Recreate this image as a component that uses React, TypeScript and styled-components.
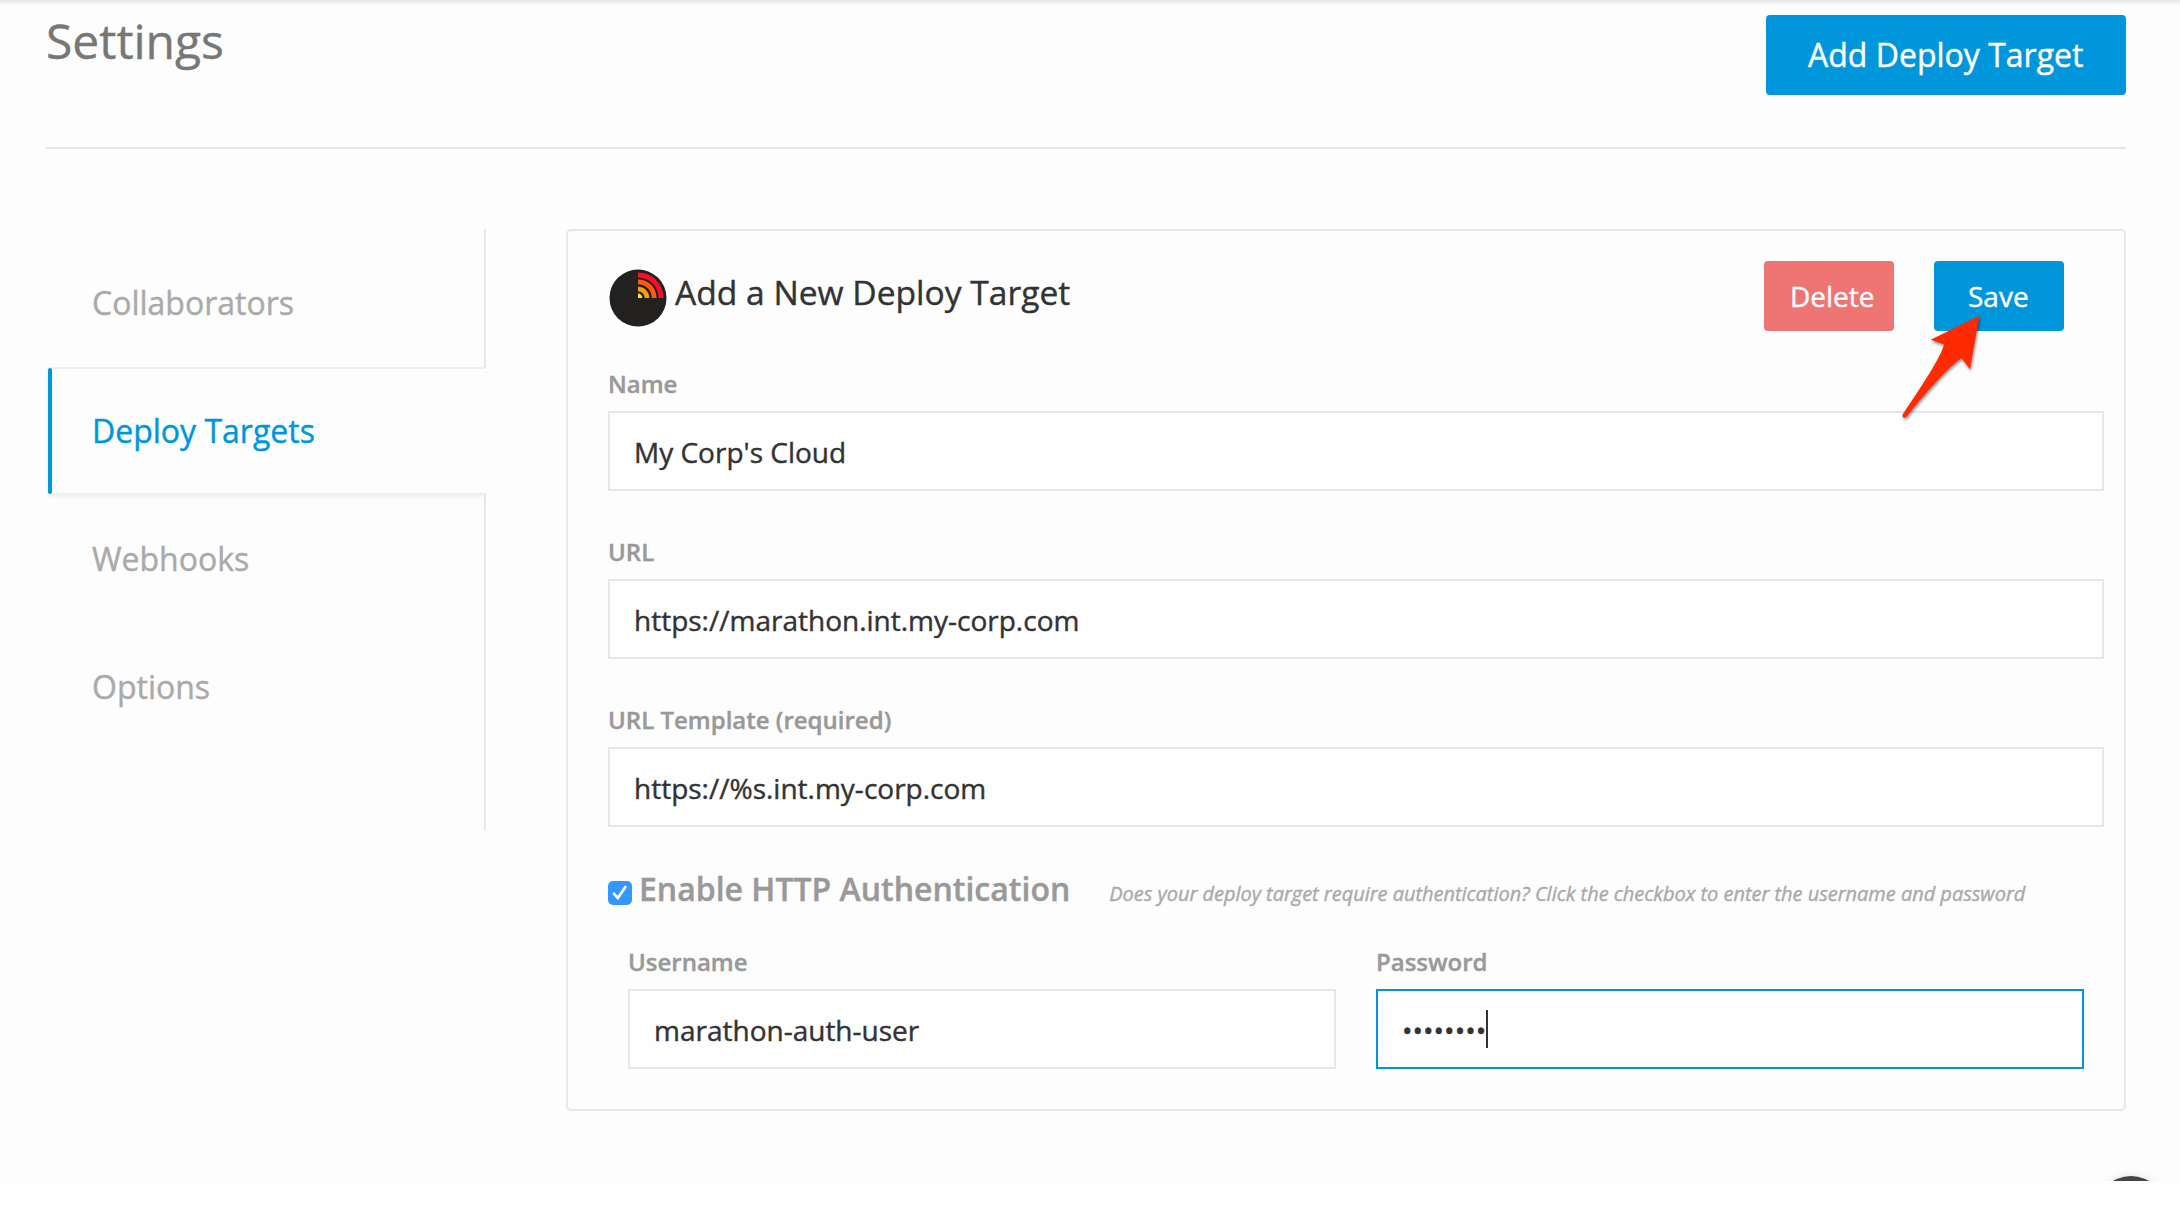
import React from 'react';
import styled, { createGlobalStyle, css } from 'styled-components';

const blue = '#0096db';
const line = '#e7e7e7';

const GlobalStyle = createGlobalStyle`
  * { box-sizing: border-box; }
  body {
    margin: 0;
    background: #fefefe;
    font-family: 'Open Sans', 'Noto Sans', sans-serif;
    color: #333;
    -webkit-text-stroke: 0.4px;
  }
`;

const Screen = styled.div`
  position: relative;
  width: 2180px;
  height: 1181px;
  padding: 0 54px 0 46px;
  overflow: hidden;
  background: linear-gradient(#e5e5e5 0, #e8e8e8 1px, #f4f4f4 3px, #fdfdfd 6px) #fdfdfd;
`;

const Header = styled.header`
  display: flex;
  justify-content: space-between;
  align-items: flex-start;
  height: 149px;
  padding-top: 15px;
  border-bottom: 2px solid ${line};
`;

const PageTitle = styled.h1`
  margin: -7px 0 0;
  font-size: 48px;
  line-height: 66px;
  font-weight: 400;
  color: #777;
`;

const Button = styled.button<{ $size?: 'large' | 'normal'; $tone?: 'primary' | 'danger' }>`
  display: flex;
  align-items: center;
  justify-content: flex-start;
  border: 0;
  border-radius: 4px;
  font-family: inherit;
  color: #fff;
  white-space: nowrap;
  background: ${({ $tone }) => ($tone === 'danger' ? '#ef7474' : blue)};
  ${({ $size, $tone }) =>
    $size === 'large'
      ? css`
          width: 360px;
          height: 80px;
          padding: 0 42px 2px;
          font-size: 32px;
        `
      : css`
          width: 130px;
          height: 70px;
          padding: 0 ${$tone === 'danger' ? 26 : 34}px;
          font-size: 28px;
        `}
`;

const Body = styled.div`
  display: flex;
  align-items: flex-start;
  gap: 80px;
  padding-top: 80px;
`;

const SideNav = styled.nav`
  width: 440px;
  height: 602px;
  padding-top: 10px;
  border-right: 2px solid ${line};
`;

const NavItem = styled.a<{ $active?: boolean }>`
  display: flex;
  align-items: center;
  height: 128px;
  padding: 0 0 2px 46px;
  font-size: 32px;
  color: #aaa;
  ${({ $active }) =>
    $active &&
    css`
      position: relative;
      margin: 0 -2px 0 2px;
      padding-left: 40px;
      color: ${blue};
      background: #fdfdfd;
      border: solid #eee;
      border-width: 2px 0;
      border-left: 4px solid ${blue};
      border-radius: 4px 0 0 4px;
      box-shadow: -1px 3px 5px -1px rgba(0, 0, 0, 0.06);
    `}
`;

const Card = styled.section`
  width: 1560px;
  height: 882px;
  padding: 30px 20px 0 40px;
  border: 2px solid ${line};
  border-radius: 5px;
`;

const CardHead = styled.div`
  display: flex;
  align-items: flex-start;
  height: 110px;
`;

const CardTitle = styled.h2`
  flex: 1;
  display: flex;
  align-items: center;
  gap: 7px;
  height: 60px;
  margin: 7px 0 0;
  font-size: 33.6px;
  font-weight: 400;
`;

const TitleText = styled.span`
  padding-bottom: 13px;
`;

const Actions = styled.div`
  display: flex;
  gap: 40px;
  margin-right: 40px;
`;

const Field = styled.div`
  display: flex;
  flex-direction: column;
  flex: 1;
`;

const Label = styled.label`
  height: 40px;
  line-height: 25px;
  font-size: 24px;
  font-weight: 600;
  color: #999;
`;

const Control = styled.div<{ $focus?: boolean }>`
  display: flex;
  align-items: center;
  height: 80px;
  padding: 2px 24px 0;
  border: 2px solid ${({ $focus }) => ($focus ? blue : line)};
  background: #fefefe;
  font-size: 28px;
`;

const Caret = styled.span`
  width: 2px;
  height: 38px;
  margin-top: -2px;
  background: #333;
`;

const Stack = styled.div`
  display: flex;
  flex-direction: column;
  gap: 48px;
`;

const AuthRow = styled.div`
  display: flex;
  align-items: flex-end;
  height: 44px;
  margin-top: 40px;
`;

const AuthTitle = styled.span`
  margin-left: 7px;
  font-size: 32px;
  line-height: 44px;
  font-weight: 600;
  color: #999;
`;

const Hint = styled.em`
  margin: 0 0 3px 39px;
  font-size: 20px;
  line-height: 28px;
  letter-spacing: -0.025px;
  white-space: nowrap;
  color: #aaa;
`;

const CheckSvg = styled.svg`
  margin-bottom: 6px;
`;

const Credentials = styled.div`
  display: flex;
  gap: 40px;
  padding: 38px 20px 0;
`;

const Arrow = styled.svg`
  position: absolute;
  left: 1880px;
  top: 300px;
  filter: drop-shadow(1px 2px 1.5px rgba(0, 0, 0, 0.45));
`;

const ChatBubble = styled.div`
  position: absolute;
  left: 2096px;
  top: 1176px;
  width: 70px;
  height: 70px;
  border-radius: 50%;
  background: #444;
  box-shadow: 0 0 8px rgba(0, 0, 0, 0.12);
`;

function ring(outer: number, inner: number) {
  return `M0 ${-outer}A${outer} ${outer} 0 0 1 ${outer} 0H${inner}A${inner} ${inner} 0 0 0 0 ${-inner}Z`;
}

function MarathonLogo() {
  return (
    <svg width="60" height="60" viewBox="-30 -30 60 60">
      <circle r="28.5" fill="#22211f" />
      <path d={ring(25.6, 20.6)} fill="#ff0a2c" />
      <path d={ring(18.6, 13.8)} fill="#ff5a0a" />
      <path d={ring(11.3, 6.8)} fill="#ff9c08" />
      <path d="M0 -4.4A4.4 4.4 0 0 1 4.4 0H0Z" fill="#f5ea1c" />
    </svg>
  );
}

function Checkbox() {
  return (
    <CheckSvg width="24" height="24" viewBox="0 0 24 24">
      <rect width="24" height="24" rx="5" fill="#3397ff" />
      <path d="M6 12.6l3.8 4.5L17.4 6" fill="none" stroke="#fff" strokeWidth="2.7" strokeLinecap="round" strokeLinejoin="round" />
    </CheckSvg>
  );
}

function TextField({ label, value, focus }: { label: string; value: string; focus?: boolean }) {
  return (
    <Field>
      <Label>{label}</Label>
      <Control $focus={focus}>
        <span>{value}</span>
        {focus && <Caret />}
      </Control>
    </Field>
  );
}

const navItems = ['Collaborators', 'Deploy Targets', 'Webhooks', 'Options'];

export default function App() {
  return (
    <>
      <GlobalStyle />
      <Screen>
        <Header>
          <PageTitle>Settings</PageTitle>
          <Button $size="large">Add Deploy Target</Button>
        </Header>
        <Body>
          <SideNav>
            {navItems.map((item) => (
              <NavItem key={item} $active={item === 'Deploy Targets'}>
                {item}
              </NavItem>
            ))}
          </SideNav>
          <Card>
            <CardHead>
              <CardTitle>
                <MarathonLogo />
                <TitleText>Add a New Deploy Target</TitleText>
              </CardTitle>
              <Actions>
                <Button $tone="danger">Delete</Button>
                <Button>Save</Button>
              </Actions>
            </CardHead>
            <Stack>
              <TextField label="Name" value="My Corp's Cloud" />
              <TextField label="URL" value="https://marathon.int.my-corp.com" />
              <TextField label="URL Template (required)" value="https://%s.int.my-corp.com" />
            </Stack>
            <AuthRow>
              <Checkbox />
              <AuthTitle>Enable HTTP Authentication</AuthTitle>
              <Hint>
                Does your deploy target require authentication? Click the checkbox to enter the username and password
              </Hint>
            </AuthRow>
            <Credentials>
              <TextField label="Username" value="marathon-auth-user" />
              <TextField label="Password" value="••••••••" focus />
            </Credentials>
          </Card>
        </Body>
        <Arrow width="120" height="130" viewBox="0 0 360 390">
          <path
            d="M298 47L152 119L192 133C184 172 116 272 69 342Q65 350 71 353Q76 354 82 347C130 286 212 192 245 175L270 208Z"
            fill="#ff2a00"
          />
        </Arrow>
        <ChatBubble />
      </Screen>
    </>
  );
}
